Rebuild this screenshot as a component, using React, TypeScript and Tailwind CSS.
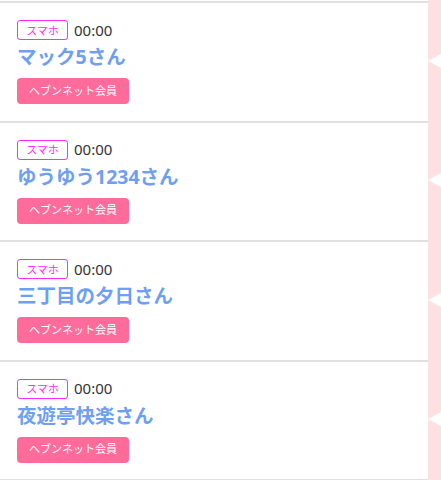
const items = ["マック5さん", "ゆうゆう1234さん", "三丁目の夕日さん", "夜遊亭快楽さん"];

function Row({ name }: { name: string }) {
  return (
    <div className="flex h-[119.5px]">
      <div className="flex-1 border-t-2 border-[#e0e0e0] bg-white pl-[17px] pt-[17px]">
        <div className="flex items-center gap-[6px]">
          <span className="flex h-[20px] w-[51px] items-center justify-center rounded-[3px] border border-[#ff2bff] text-[11px] leading-none text-[#ff2bff]">
            スマホ
          </span>
          <span className="text-[15px] leading-none text-[#333]">00:00</span>
        </div>
        <div className="mt-[4px] text-[19.5px] font-bold leading-[26px] text-[#6f9ff2]">{name}</div>
        <div className="mt-[8px] flex h-[26px] w-[112px] items-center justify-center rounded-[4px] bg-[#ff6b9b] text-[11px] text-white">
          ヘブンネット会員
        </div>
      </div>
      <div className="flex w-[13px] items-center bg-[#ffe0e2]">
        <svg width="13" height="14" viewBox="0 0 13 14">
          <polygon points="0,7 13,0 13,14" fill="#fff" />
        </svg>
      </div>
    </div>
  );
}

export default function App() {
  return (
    <div
      className="h-[480px] w-[441px] overflow-hidden bg-white"
      style={{ fontFamily: '"Noto Sans", "Noto Sans CJK JP", sans-serif' }}
    >
      <div className="flex h-px">
        <div className="flex-1 bg-white" />
        <div className="w-[13px] bg-[#ffe0e2]" />
      </div>
      {items.map((n) => (
        <Row key={n} name={n} />
      ))}
      <div className="flex h-[10px]">
        <div className="flex-1 border-t-2 border-[#e0e0e0] bg-white" />
        <div className="w-[13px] bg-[#ffe0e2]" />
      </div>
    </div>
  );
}
